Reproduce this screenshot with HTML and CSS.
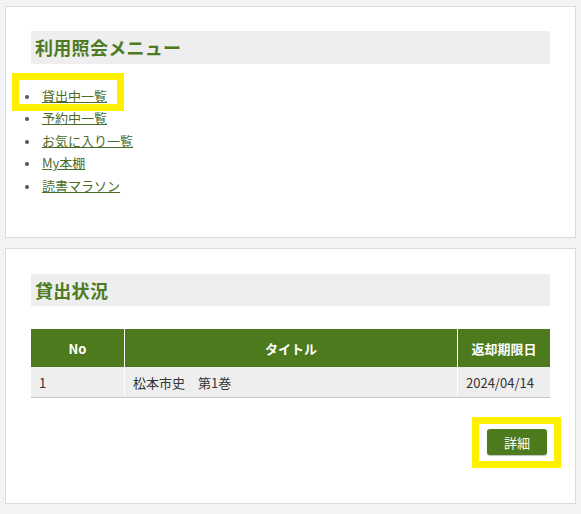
FILE: index.html
```html
<!DOCTYPE html>
<html lang="ja">
<head>
    <meta charset="UTF-8">
    <title>利用照会</title>
    <link rel="stylesheet" href="styles.css">
</head>
<body>
    <div class="panel menu-panel">
        <h2 class="panel-title">利用照会メニュー</h2>
        <ul class="menu-list">
            <li class="marked"><a href="#">貸出中一覧</a><span class="mark mark-menu"></span></li>
            <li><a href="#">予約中一覧</a></li>
            <li><a href="#">お気に入り一覧</a></li>
            <li><a href="#">My本棚</a></li>
            <li><a href="#">読書マラソン</a></li>
        </ul>
    </div>

    <div class="panel loan-panel">
        <h2 class="panel-title">貸出状況</h2>
        <table class="loan-table">
            <thead>
                <tr>
                    <th class="col-no">No</th>
                    <th class="col-title">タイトル</th>
                    <th class="col-date">返却期限日</th>
                </tr>
            </thead>
            <tbody>
                <tr>
                    <td>1</td>
                    <td>松本市史　第1巻</td>
                    <td>2024/04/14</td>
                </tr>
            </tbody>
        </table>
        <div class="actions">
            <button class="detail-btn">詳細</button>
            <span class="mark mark-btn"></span>
        </div>
    </div>
</body>
</html>
```

FILE: styles.css
```css
body {
    font-family: "Noto Sans CJK JP", "Noto Sans", sans-serif;
    background-color: #f2f3f4;
    margin: 0;
    padding: 6px 5px 0 5px;
    color: #333;
    font-size: 13px;
}

.panel {
    background: #fff;
    border: 1px solid #dcdcdc;
    padding: 24px 25px 0 25px;
}

.menu-panel {
    height: 206px;
    margin-bottom: 10px;
}

.loan-panel {
    padding-top: 25px;
    height: 229px;
}

.panel-title {
    margin: 0;
    background-color: #eeeeee;
    color: #4d7a22;
    font-size: 18px;
    font-weight: bold;
    line-height: 33px;
    height: 33px;
    padding-left: 4px;
    letter-spacing: 0.3px;
}

.loan-panel .panel-title {
    height: 32px;
    line-height: 32px;
}

.menu-list {
    margin: 21px 0 0 0;
    padding-left: 11px;
    list-style: none;
}

.menu-list li {
    position: relative;
    line-height: 22.4px;
    height: 22.4px;
}

.menu-list li::before {
    content: "";
    position: absolute;
    left: -17px;
    top: 10px;
    width: 4px;
    height: 4px;
    border-radius: 50%;
    background: #555;
}

.menu-list a {
    color: #4a6b28;
    text-decoration: underline;
    font-size: 13px;
}

/* 黄色の注目枠 */
.mark {
    position: absolute;
    border: 7px solid #fff000;
    box-sizing: border-box;
}

.mark-menu {
    left: -30px;
    top: -12px;
    width: 112px;
    height: 38px;
}

.loan-table {
    width: 100%;
    border-collapse: collapse;
    margin-top: 23px;
}

.loan-table th {
    background-color: #4d7a1c;
    color: #fff;
    font-weight: bold;
    font-size: 13px;
    height: 38px;
    padding: 0;
    text-align: center;
    border-left: 1px solid #fff;
}

.loan-table th:first-child,
.loan-table td:first-child {
    border-left: none;
}

.loan-table td {
    background-color: #eeeeee;
    height: 30px;
    padding: 0 8px;
    border-left: 1px solid #fff;
    border-bottom: 1px solid #c8c8c8;
    font-size: 13px;
}

.col-no {
    width: 93px;
}

.col-date {
    width: 92px;
}

.actions {
    position: relative;
    display: flex;
    justify-content: flex-end;
    margin-top: 31px;
    padding-right: 3px;
}

.detail-btn {
    background-color: #4d7a1c;
    color: #fff;
    border: none;
    border-radius: 3px;
    width: 60px;
    height: 26px;
    font-family: inherit;
    font-size: 13px;
    cursor: pointer;
    box-shadow: 0 1px 1px rgba(0, 0, 0, 0.25);
}

.mark-btn {
    right: -11px;
    top: -12px;
    width: 89px;
    height: 51px;
}
```
